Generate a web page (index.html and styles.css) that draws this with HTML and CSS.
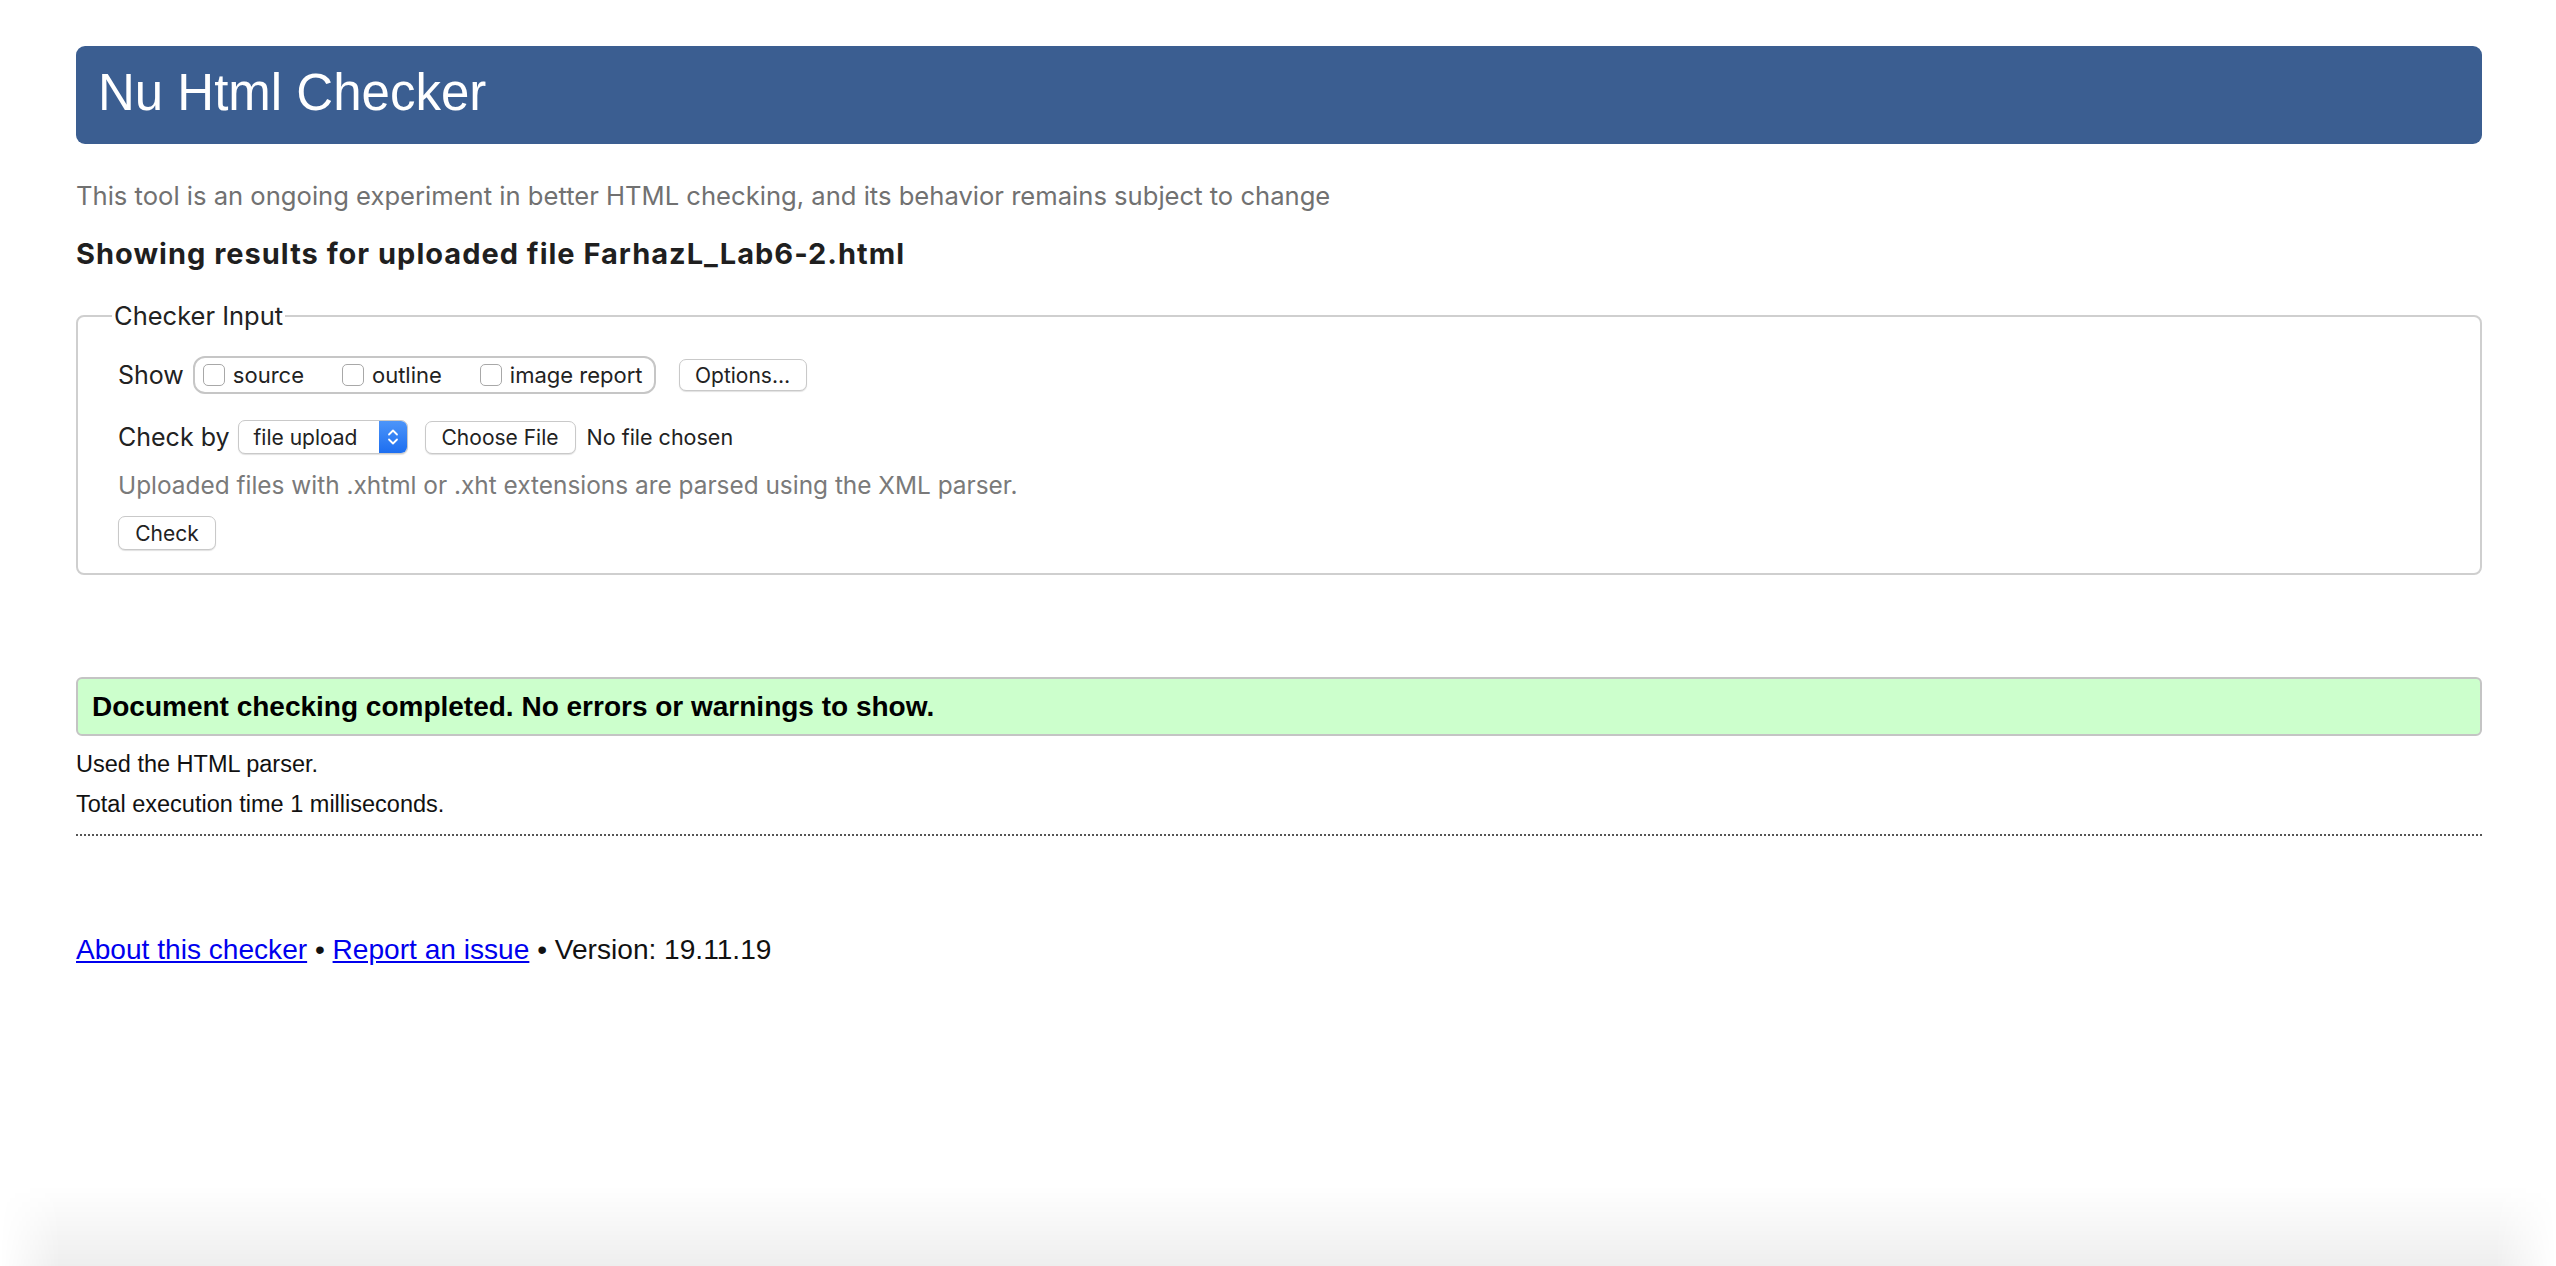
FILE: index.html
```html
<!DOCTYPE html>
<html lang="en">
<head>
<meta charset="utf-8">
<title>Nu Html Checker</title>
<link rel="stylesheet" href="styles.css">
</head>
<body>
<div class="page">
  <h1 class="banner">Nu Html Checker</h1>
  <p class="subtitle">This tool is an ongoing experiment in better HTML checking, and its behavior remains subject to change</p>
  <h2 class="results-title">Showing results for uploaded file FarhazL_Lab6-2.html</h2>

  <fieldset class="checker-input">
    <legend class="legend">Checker Input</legend>
    <div class="row row-show">
      <span class="label">Show</span>
      <div class="toggles">
        <span class="cb"></span><span class="cb-text">source</span>
        <span class="cb cb-gap"></span><span class="cb-text">outline</span>
        <span class="cb cb-gap"></span><span class="cb-text">image report</span>
      </div>
      <span class="btn btn-options">Options…</span>
    </div>
    <div class="row row-check">
      <span class="label">Check by</span>
      <div class="select">
        <span class="select-text">file upload</span>
        <span class="stepper">
          <svg width="14" height="22" viewBox="0 0 14 22"><path d="M3 8.5 L7 4.5 L11 8.5 M3 13.5 L7 17.5 L11 13.5" fill="none" stroke="#fff" stroke-width="1.8" stroke-linecap="round" stroke-linejoin="round"/></svg>
        </span>
      </div>
      <span class="btn btn-file">Choose File</span>
      <span class="file-status">No file chosen</span>
    </div>
    <p class="helper">Uploaded files with .xhtml or .xht extensions are parsed using the XML parser.</p>
    <div class="row-submit"><span class="btn btn-check">Check</span></div>
  </fieldset>

  <div class="success">Document checking completed. No errors or warnings to show.</div>
  <p class="info">Used the HTML parser.</p>
  <p class="info">Total execution time 1 milliseconds.</p>
  <hr class="divider">
  <p class="footer"><a href="#">About this checker</a> • <a href="#">Report an issue</a> • Version: 19.11.19</p>
</div>
<div class="bottom-shade"></div>
</body>
</html>
```
FILE: styles.css
```css
html, body {
  margin: 0;
  padding: 0;
  background: #ffffff;
}
body {
  font-family: "Liberation Sans", Arial, sans-serif;
  color: #111;
}
.page {
  padding: 46px 74px 0 76px;
}
.banner {
  margin: 0;
  background: #3b5e91;
  color: #ffffff;
  font-family: "Liberation Sans", Arial, sans-serif;
  font-weight: normal;
  font-size: 51px;
  line-height: 59px;
  padding: 17px 22px 22px;
  border-radius: 9px;
}
.subtitle {
  margin: 37px 0 0;
  font-family: "Inter", "Noto Sans", sans-serif;
  font-size: 25.6px;
  line-height: 30px;
  color: #717171;
}
.results-title {
  margin: 26px 0 0;
  font-family: "Inter", "Noto Sans", sans-serif;
  font-weight: 700;
  font-size: 29px;
  letter-spacing: 1px;
  line-height: 33px;
  color: #1f1f1f;
}
.checker-input {
  margin: 31px 0 0;
  padding: 25px 20px 23px 40px;
  border: 2px solid #cfcfcf;
  border-radius: 8px;
  font-family: "Inter", "Noto Sans", sans-serif;
  color: #222;
}
.legend {
  margin-left: -6px;
  padding: 0 2px;
  font-size: 25.5px;
  line-height: 30px;
  color: #222;
}
.row {
  display: flex;
  align-items: center;
}
.row-show {
  height: 38px;
}
.row-check {
  height: 34px;
  margin-top: 26px;
}
.label {
  font-size: 25px;
  color: #222;
}
.row-show .label {
  margin-right: 9px;
}
.row-check .label {
  margin-right: 8px;
}
.toggles {
  display: flex;
  align-items: center;
  box-sizing: border-box;
  height: 38px;
  padding: 0 11px 0 8px;
  border: 2px solid #c6c6c6;
  border-radius: 12px;
}
.cb {
  box-sizing: border-box;
  width: 22px;
  height: 22px;
  border: 1.5px solid #a8a8a8;
  border-radius: 5px;
  background: #fff;
  margin-right: 8px;
}
.cb-gap {
  margin-left: 38px;
}
.cb-text {
  font-size: 22px;
  color: #222;
}
.btn {
  display: inline-flex;
  align-items: center;
  justify-content: center;
  box-sizing: border-box;
  background: #ffffff;
  border: 1px solid #c9c9c9;
  border-radius: 7px;
  box-shadow: 0 1px 1px rgba(0, 0, 0, 0.12);
  font-family: "Inter", "Noto Sans", sans-serif;
  font-size: 21px;
  color: #222;
}
.btn-options {
  width: 128px;
  height: 32px;
  margin-left: 23px;
}
.select {
  display: flex;
  align-items: stretch;
  box-sizing: border-box;
  width: 170px;
  height: 34px;
  border: 1px solid #c9c9c9;
  border-radius: 7px;
  box-shadow: 0 1px 1px rgba(0, 0, 0, 0.12);
  background: #fff;
  overflow: hidden;
}
.select-text {
  flex: 1;
  display: flex;
  align-items: center;
  padding-left: 15px;
  font-size: 21px;
  color: #222;
}
.stepper {
  width: 28px;
  display: flex;
  align-items: center;
  justify-content: center;
  background: linear-gradient(#4d95f9, #1d6ef0);
}
.btn-file {
  width: 151px;
  height: 33px;
  margin-left: 17px;
}
.file-status {
  margin-left: 11px;
  font-size: 21.5px;
  color: #222;
}
.helper {
  margin: 17px 0 0;
  font-size: 24.4px;
  line-height: 29px;
  color: #7a7a7a;
}
.row-submit {
  margin-top: 16px;
  display: flex;
}
.btn-check {
  width: 98px;
  height: 34px;
}
.success {
  margin-top: 102px;
  box-sizing: border-box;
  height: 59px;
  padding: 0 14px;
  background: #ccffcc;
  border: 2px solid #c4c4c4;
  border-radius: 6px;
  font-family: "Liberation Sans", Arial, sans-serif;
  font-weight: bold;
  font-size: 28px;
  line-height: 55px;
  color: #000;
}
.info {
  margin: 0;
  font-family: "Liberation Sans", Arial, sans-serif;
  font-size: 23.5px;
  line-height: 40px;
  color: #111;
}
.success + .info {
  margin-top: 8px;
}
.divider {
  margin: 10px 0 0;
  border: 0;
  border-top: 2px dotted #555;
  height: 0;
}
.footer {
  margin: 94px 0 0;
  font-family: "Liberation Sans", Arial, sans-serif;
  font-size: 28.1px;
  line-height: 40px;
  color: #111;
}
.footer a {
  color: #0000ee;
  text-decoration: underline;
}
.bottom-shade {
  position: fixed;
  left: 0;
  right: 0;
  bottom: 0;
  height: 80px;
  background: linear-gradient(to bottom, rgba(0, 0, 0, 0), rgba(0, 0, 0, 0.065));
  -webkit-mask-image: linear-gradient(to right, transparent 0, #000 60px, #000 calc(100% - 60px), transparent 100%);
  mask-image: linear-gradient(to right, transparent 0, #000 60px, #000 calc(100% - 60px), transparent 100%);
  pointer-events: none;
}
```
